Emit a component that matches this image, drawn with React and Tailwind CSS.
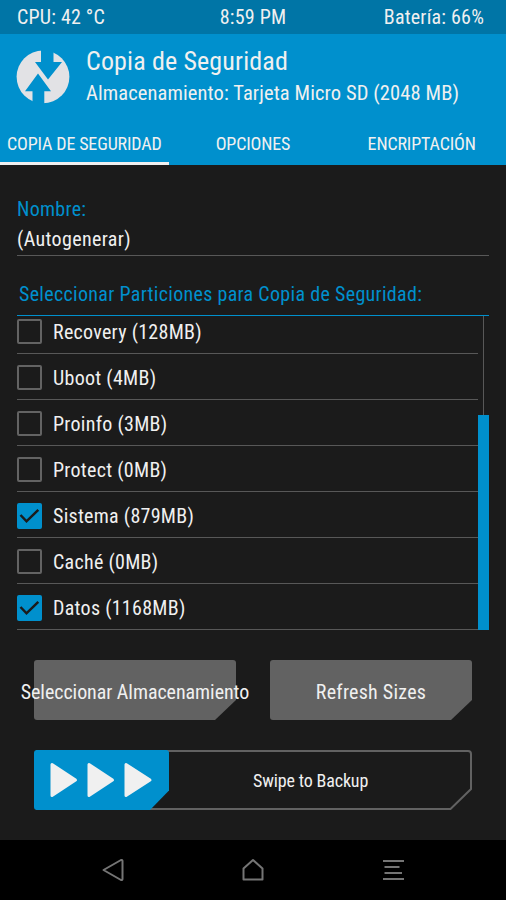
const partitions = [
  { name: "Recovery (128MB)", checked: false },
  { name: "Uboot (4MB)", checked: false },
  { name: "Proinfo (3MB)", checked: false },
  { name: "Protect (0MB)", checked: false },
  { name: "Sistema (879MB)", checked: true },
  { name: "Caché (0MB)", checked: false },
  { name: "Datos (1168MB)", checked: true },
];

function Logo() {
  return (
    <svg width="54" height="54" viewBox="0 0 54 54">
      <circle cx="27" cy="26.8" r="26.4" fill="#e2e2e5" />
      <path d="M25 0h12.500v12h8.500L32 29.500 19 12h6z" fill="#0090cd" />
      <path d="M16.500 54V41.200H9L22 23.500l13 17.700h-6.700V54z" fill="#0090cd" />
    </svg>
  );
}

function Checkbox({ checked }) {
  if (!checked) {
    return <span className="h-[25px] w-[25px] shrink-0 rounded-[2px] border-2 border-[#636363]" />;
  }
  return (
    <span className="flex h-[26px] w-[25px] shrink-0 items-center justify-center rounded-[2px] bg-[#0090cd]">
      <svg width="25" height="26" viewBox="0 0 25 26" fill="none">
        <path d="M3.500 12l6 6.300L21.300 6.800" stroke="#1b1b1b" strokeWidth="2.500" />
      </svg>
    </span>
  );
}

// button plate with the cut bottom right corner
function Button({ children, className }) {
  return (
    <button className={`grid h-[60px] w-[202px] place-items-center ${className}`}>
      <svg className="col-start-1 row-start-1" width="202" height="60" viewBox="0 0 202 60">
        <path d="M3 0h196a3 3 0 0 1 3 3v37l-21 20H3a3 3 0 0 1-3-3V3a3 3 0 0 1 3-3z" fill="#626262" />
      </svg>
      <span className="col-start-1 row-start-1 flex w-0 justify-center pt-[3px]">{children}</span>
    </button>
  );
}

function Slider() {
  return (
    <div className="mx-[17px] mt-[30px] grid h-[60px] w-[438px] items-center">
      <svg className="col-start-1 row-start-1" width="438" height="60" viewBox="0 0 438 60">
        <path d="M3 1h431a3 3 0 0 1 3 3v35l-20.500 20H3z" fill="none" stroke="#626262" strokeWidth="2" />
        <path d="M3 0h129a3 3 0 0 1 3 3v37.500L116 60H3a3 3 0 0 1-3-3V3a3 3 0 0 1 3-3z" fill="#0090cd" />
        <g fill="#f0f0f0" stroke="#f0f0f0" strokeWidth="3" strokeLinejoin="round">
          <path d="M18 14.500v31L41.500 30z" />
          <path d="M55 14.500v31L78.500 30z" />
          <path d="M92 14.500v31L116 30z" />
        </g>
      </svg>
      <span className="col-start-1 row-start-1 pt-px pl-[219px] text-[18px] tracking-[-0.15px]">Swipe to Backup</span>
    </div>
  );
}

function NavBar() {
  return (
    <div className="flex h-[60px] items-center justify-between bg-black px-[101px]">
      <svg width="24" height="24" viewBox="0 0 24 24" fill="none" stroke="#757575" strokeWidth="2" strokeLinejoin="round">
        <path d="M2.500 12L20 2q1.500-.4 1.500 1v18q0 1.400-1.500 1z" />
      </svg>
      <svg width="24" height="24" viewBox="0 0 24 24" fill="none" stroke="#757575" strokeWidth="2" strokeLinejoin="round">
        <path d="M12 2l9.500 8.500v11h-19v-11z" />
      </svg>
      <svg width="24" height="24" viewBox="0 0 24 24" fill="none" stroke="#757575" strokeWidth="2">
        <path d="M2 3h21M3.500 9h15M3.500 15h17.500M2 21h21" />
      </svg>
    </div>
  );
}

export default function App() {
  return (
    <div className="flex h-[900px] w-[506px] flex-col overflow-hidden bg-[#1b1b1b] font-['Roboto',sans-serif] text-[20px] font-normal tracking-[0.28px] whitespace-nowrap text-[#f0f0f0] [font-stretch:75%]">
      <div className="grid h-[34px] grid-cols-3 items-center bg-[#0075a6] pr-[22px] pb-px pl-[17px] tracking-[0.2px]">
        <span>CPU: 42 °C</span>
        <span className="pl-[5px] text-center">8:59 PM</span>
        <span className="text-right">Batería: 66%</span>
      </div>

      <div className="flex h-[131px] flex-col bg-[#0090cd]">
        <div className="flex h-[86px] items-center gap-4 pl-4">
          <Logo />
          <div className="flex flex-col">
            <span className="text-[26px] leading-8 tracking-[0.15px]">Copia de Seguridad</span>
            <span className="text-[20.5px] leading-8 tracking-[0.11px]">Almacenamiento: Tarjeta Micro SD (2048 MB)</span>
          </div>
        </div>
        <div className="grid flex-1 grid-cols-3 text-[18px] tracking-[-0.15px]">
          <span className="flex items-center justify-center border-b-[3px] pt-1">COPIA DE SEGURIDAD</span>
          <span className="flex items-center justify-center pt-0.5">OPCIONES</span>
          <span className="flex items-center justify-center pt-0.5">ENCRIPTACIÓN</span>
        </div>
      </div>

      <div className="flex flex-1 flex-col px-[17px] pt-[29px]">
        <span className="leading-[30px] text-[#0090cd]">Nombre:</span>
        <span className="h-[32px] border-b border-[#585858] leading-[30px] tracking-[0.36px]">(Autogenerar)</span>
        <span className="mt-[23px] h-[37px] border-b border-[#0090cd] pl-0.5 tracking-[0.31px] text-[#0090cd]">
          Seleccionar Particiones para Copia de Seguridad:
        </span>
        <div className="flex h-[314px]">
          <div className="flex flex-1 flex-col justify-end overflow-hidden">
            {partitions.map((p) => (
              <div key={p.name} className="flex h-[46px] shrink-0 items-center gap-[11px] border-b border-[#585858] pt-0.5">
                <Checkbox checked={p.checked} />
                <span>{p.name}</span>
              </div>
            ))}
          </div>
          <div className="flex w-[11px] flex-col items-center">
            <div className="w-px flex-1 bg-[#585858]" />
            <div className="h-[215px] w-full bg-[#0090cd]" />
          </div>
        </div>

        <div className="mx-[17px] mt-[30px] flex justify-between">
          <Button className="tracking-[-0.05px]">Seleccionar Almacenamiento</Button>
          <Button className="tracking-[0.25px]">Refresh Sizes</Button>
        </div>
        <Slider />
      </div>

      <NavBar />
    </div>
  );
}
